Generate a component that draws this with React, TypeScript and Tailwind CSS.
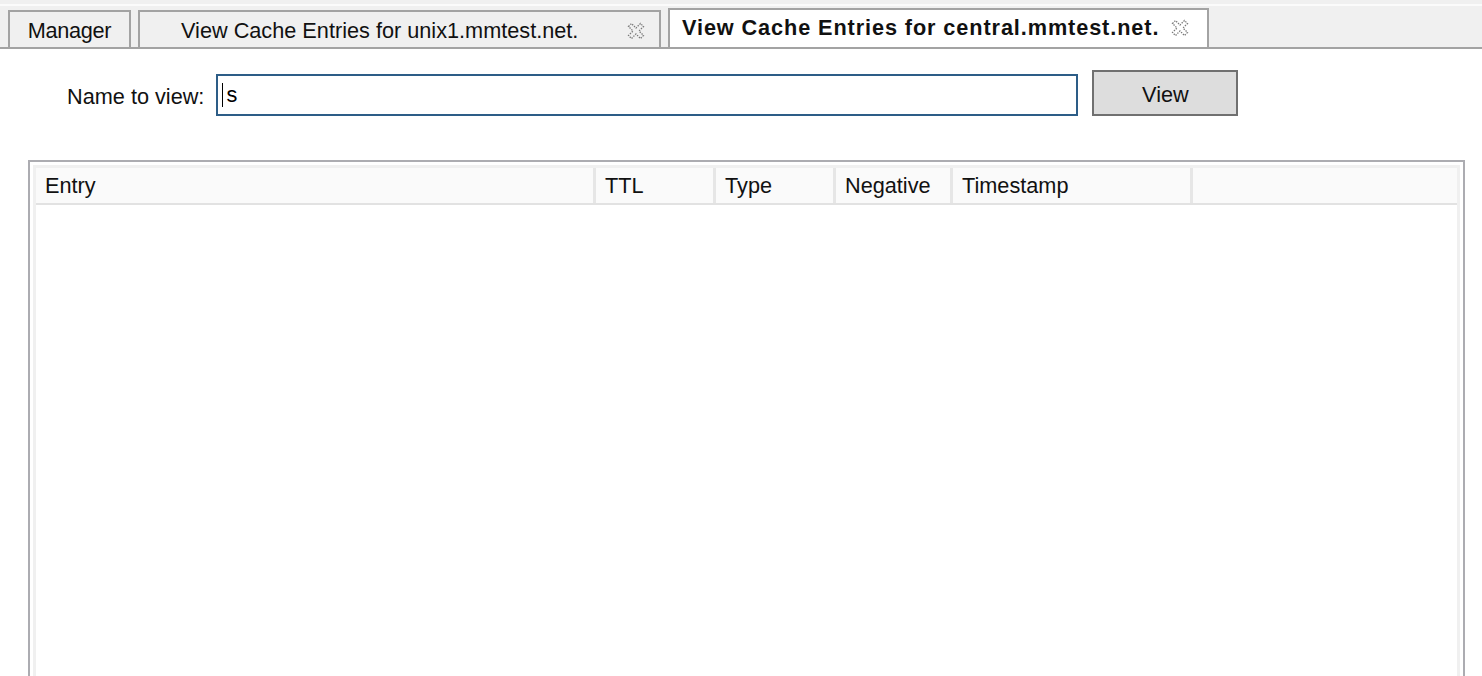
import React from "react";

function CloseIcon() {
  return (
    <svg width="18" height="18" viewBox="0 0 18 18" className="shrink-0">
      <polygon
        points="1.5,4.5 4.5,1.5 9,6 13.5,1.5 16.5,4.5 12,9 16.5,13.5 13.5,16.5 9,12 4.5,16.5 1.5,13.5 6,9"
        fill="none"
        stroke="#7a7a7a"
        strokeWidth="1.3"
        strokeDasharray="1.4 1.2"
      />
    </svg>
  );
}

const cols = [
  { label: "Entry", w: "w-[560px]" },
  { label: "TTL", w: "w-[120px]" },
  { label: "Type", w: "w-[120px]" },
  { label: "Negative", w: "w-[117px]" },
  { label: "Timestamp", w: "w-[240px]" },
];

export default function App() {
  return (
    <div
      className="w-[1482px] h-[676px] overflow-hidden bg-white text-[21.7px] text-[#111]"
      style={{ fontFamily: '"Liberation Sans", Arial, sans-serif' }}
    >
      <div className="h-[4px] bg-[#f0f0f0]" />
      <div className="h-[2px] bg-[#fbfbfb]" />
      <div className="flex items-end h-[43px] bg-[#f0f0f0] pl-[8px] gap-[7px] border-b-2 border-[#a3a3a3]">
        <div className="w-[123px] h-[37px] border-2 border-b-0 border-[#a3a3a3] bg-[#f0f0f0] flex items-center justify-center leading-none pt-[3px]">
          <span className="tracking-[-0.3px]">Manager</span>
        </div>
        <div className="w-[523px] h-[37px] border-2 border-b-0 border-[#a3a3a3] bg-[#f0f0f0] flex items-center pl-[41px] pr-[14px] leading-none pt-[3px]">
          <span>View Cache Entries for unix1.mmtest.net.</span>
          <span className="ml-auto">
            <CloseIcon />
          </span>
        </div>
        <div className="w-[541px] h-[39px] border-2 border-b-0 border-[#a3a3a3] bg-white flex items-center pl-[12px] leading-none pb-[1px]">
          <span className="font-bold tracking-[0.9px]">View Cache Entries for central.mmtest.net.</span>
          <span className="ml-[12px]">
            <CloseIcon />
          </span>
        </div>
      </div>

      <div className="flex items-start pl-[67px] mt-[21px]">
        <div className="flex items-center mt-[4px]">
          <span className="leading-none mr-[12px] pt-[3px]">Name to view:</span>
          <div className="w-[862px] h-[42px] border-2 border-[#2d5d87] bg-white flex items-center pl-[4px] leading-none">
            <span className="w-px h-[24px] bg-black mr-[3px]" />
            <span className="text-black">s</span>
          </div>
        </div>
        <button className="ml-[14px] w-[146px] h-[46px] bg-[#dddddd] border-2 border-[#707070] leading-none text-[#111] pt-[3px]">
          View
        </button>
      </div>

      <div className="ml-[28px] mt-[44px] w-[1437px] h-[600px] border-2 border-[#acacb1] bg-white p-[3px]">
        <div className="h-full border-[3px] border-[#f0f0f0] bg-white">
          <div className="flex h-[37px] bg-[#fafafa] border-b-2 border-[#e2e2e2]">
            {cols.map((c) => (
              <div
                key={c.label}
                className={`${c.w} h-full border-r-[3px] border-[#e6e6e6] flex items-center pl-[9px] leading-none`}
              >
                {c.label}
              </div>
            ))}
            <div className="flex-1" />
          </div>
        </div>
      </div>
    </div>
  );
}
